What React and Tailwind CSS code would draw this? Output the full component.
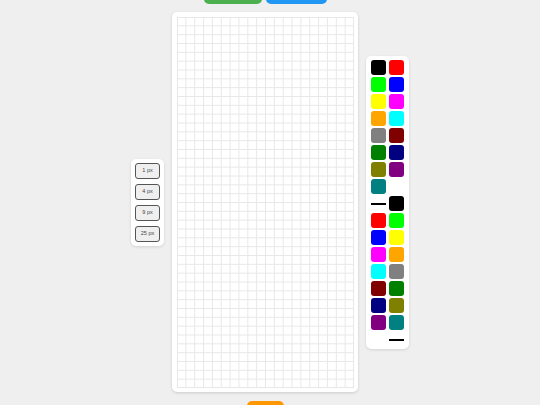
import React from "react";

const COLORS = [
  "#000000", "#ff0000", "#00ff00", "#0000ff", "#ffff00", "#ff00ff",
  "#ffa500", "#00ffff", "#808080", "#800000", "#008000", "#000080",
  "#808000", "#800080", "#008080", "#ffffff",
];

function Swatch({ color }) {
  return <div className="w-[15px] h-[15px] rounded-[3px]" style={{ backgroundColor: color }} />;
}

function Line() {
  return (
    <div className="w-[15px] h-[15px] flex items-center">
      <div className="w-[15px] h-[2px] bg-black" />
    </div>
  );
}

function Grid() {
  const w = 177;
  const h = 371;
  const cols = 20;
  const rows = 42;
  const cw = w / cols;
  const rh = h / rows;
  const lines = [];
  for (let i = 0; i <= cols; i++) {
    const x = Math.min(Math.max(i * cw, 0.5), w - 0.5);
    lines.push(<line key={"c" + i} x1={x} y1={0} x2={x} y2={h} stroke="#e8e8e8" strokeWidth="1" />);
  }
  for (let j = 0; j <= rows; j++) {
    const y = Math.min(Math.max(j * rh, 0.5), h - 0.5);
    lines.push(<line key={"r" + j} x1={0} y1={y} x2={w} y2={y} stroke="#e8e8e8" strokeWidth="1" />);
  }
  return (
    <svg width={w} height={h} viewBox={`0 0 ${w} ${h}`} className="block bg-white">
      {lines}
    </svg>
  );
}

export default function App() {
  const sizes = ["1 px", "4 px", "9 px", "25 px"];
  return (
    <div
      className="w-[540px] h-[405px] overflow-hidden bg-[#efefef] flex items-center justify-center gap-2"
      style={{ fontFamily: '"Liberation Sans", Arial, sans-serif' }}
    >
      <div className="bg-white rounded-[5px] shadow-[0_1px_3px_rgba(0,0,0,0.12)] px-[4px] pt-[4px] pb-[4px] flex flex-col gap-[5px]">
        {sizes.map((s) => (
          <button
            key={s}
            className="w-[25px] h-[16px] rounded-[3px] border border-[#555] bg-[#efefef] text-[5.5px] leading-none text-[#444] flex items-center justify-center"
          >
            {s}
          </button>
        ))}
      </div>

      <div className="flex flex-col items-center">
        <div className="flex gap-[4px]">
          <button className="w-[58px] h-[30px] rounded-[5px] bg-[#4caf50]" />
          <button className="w-[61px] h-[30px] rounded-[5px] bg-[#2196f3]" />
        </div>
        <div className="mt-[8px] w-[186px] h-[380px] bg-white rounded-[5px] shadow-[0_1px_3px_rgba(0,0,0,0.15)] pl-[5px] pt-[5px]">
          <Grid />
        </div>
        <button className="mt-[9px] w-[37px] h-[30px] rounded-[5px] bg-[#ff9800]" />
      </div>

      <div className="bg-white rounded-[5px] shadow-[0_1px_3px_rgba(0,0,0,0.12)] px-[5px] pt-[4px] pb-[2px] grid grid-cols-[15px_15px] gap-x-[3px] gap-y-[2px]">
        {COLORS.map((c, i) => (
          <Swatch key={"a" + i} color={c} />
        ))}
        <Line />
        {COLORS.map((c, i) => (
          <Swatch key={"b" + i} color={c} />
        ))}
        <Line />
      </div>
    </div>
  );
}
